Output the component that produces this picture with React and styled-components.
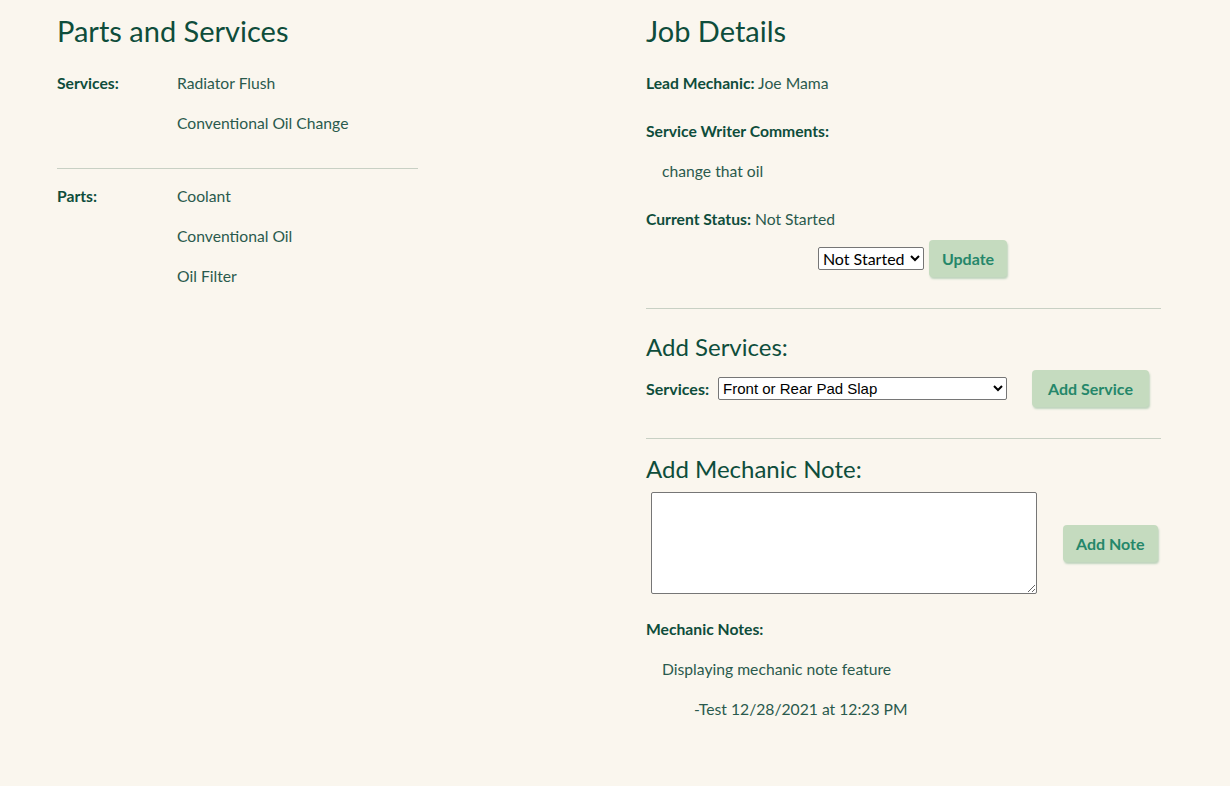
import React from 'react';
import styled, { createGlobalStyle } from 'styled-components';

const GlobalStyle = createGlobalStyle`
  html, body {
    margin: 0;
    padding: 0;
    background: #faf6ee;
  }
  body {
    font-family: Lato, "Noto Sans", sans-serif;
    color: #1d5446;
  }
`;

const services = ['Radiator Flush', 'Conventional Oil Change'];
const parts = ['Coolant', 'Conventional Oil', 'Oil Filter'];

const App = () => {
  return (
    <Page>
      <GlobalStyle />
      <Column>
        <Title>Parts and Services</Title>
        <ListRow $top="20px">
          <RowLabel>Services:</RowLabel>
          <Values>
            {services.map((s) => <Value key={s}>{s}</Value>)}
          </Values>
        </ListRow>
        <Divider $width="361px" $top="33px" $bottom="0" />
        <ListRow $top="15px">
          <RowLabel>Parts:</RowLabel>
          <Values>
            {parts.map((p) => <Value key={p}>{p}</Value>)}
          </Values>
        </ListRow>
      </Column>

      <Column>
        <Title>Job Details</Title>
        <Line $top="20px"><Bold>Lead Mechanic:</Bold> Joe Mama</Line>
        <Line $top="24px"><Bold>Service Writer Comments:</Bold></Line>
        <Line $top="16px" $indent="16px">change that oil</Line>
        <Line $top="24px"><Bold>Current Status:</Bold> Not Started</Line>
        <StatusRow>
          <StatusSelect defaultValue="Not Started">
            <option>Not Started</option>
            <option>In Progress</option>
            <option>Completed</option>
          </StatusSelect>
          <Button>Update</Button>
        </StatusRow>
        <Divider $top="31px" $bottom="0" />
        <SubTitle $top="22px">Add Services:</SubTitle>
        <ServiceRow>
          <Bold>Services:</Bold>
          <ServiceSelect defaultValue="Front or Rear Pad Slap">
            <option>Front or Rear Pad Slap</option>
            <option>Radiator Flush</option>
            <option>Conventional Oil Change</option>
          </ServiceSelect>
          <Button $left="25px" $pad="16px">Add Service</Button>
        </ServiceRow>
        <Divider $top="31px" $bottom="0" />
        <SubTitle $top="14px">Add Mechanic Note:</SubTitle>
        <NoteRow>
          <NoteArea />
          <Button>Add Note</Button>
        </NoteRow>
        <Line $top="23px"><Bold>Mechanic Notes:</Bold></Line>
        <Line $top="16px" $indent="16px">Displaying mechanic note feature</Line>
        <Line $top="16px" $indent="48px">-Test 12/28/2021 at 12:23 PM</Line>
      </Column>
    </Page>
  );
};

export default App;

const Page = styled.div`
  display: grid;
  grid-template-columns: 589px 515px;
  padding: 0 69px 60px 57px;
  min-height: 786px;
  box-sizing: border-box;
`;

const Column = styled.div`
  display: flex;
  flex-direction: column;
`;

const Title = styled.h2`
  margin: 11px 0 0;
  font-size: 29px;
  line-height: 40px;
  font-weight: 400;
  color: #0e4d3b;
`;

const SubTitle = styled.h3`
  margin: ${(p) => p.$top} 0 0;
  font-size: 24px;
  line-height: 32px;
  font-weight: 400;
  color: #0e4d3b;
`;

const ListRow = styled.div`
  display: flex;
  margin-top: ${(p) => p.$top};
  font-size: 15.7px;
  line-height: 24px;
`;

const RowLabel = styled.div`
  width: 120px;
  font-weight: 700;
  color: #0e4d3b;
`;

const Values = styled.div`
  display: flex;
  flex-direction: column;
  gap: 16px;
`;

const Value = styled.div`
  color: #2a5a4d;
`;

const Divider = styled.hr`
  width: ${(p) => p.$width || '100%'};
  margin: ${(p) => p.$top} 0 ${(p) => p.$bottom};
  border: none;
  border-top: 1px solid #c8d0c4;
  height: 0;
`;

const Line = styled.div`
  margin-top: ${(p) => p.$top};
  padding-left: ${(p) => p.$indent || '0'};
  font-size: 15.7px;
  line-height: 24px;
  color: #2a5a4d;
`;

const Bold = styled.span`
  font-weight: 700;
  color: #0e4d3b;
`;

const Button = styled.button`
  margin-left: ${(p) => p.$left || '0'};
  padding: 0 ${(p) => p.$pad || '13px'};
  height: 37px;
  border: none;
  border-radius: 4px;
  background: #c5dbbf;
  box-shadow: 1px 2px 2px rgba(120, 170, 130, 0.45);
  font-family: Lato, "Noto Sans", sans-serif;
  font-size: 16px;
  font-weight: 700;
  color: #25876a;
  cursor: pointer;
`;

const StatusRow = styled.div`
  display: flex;
  align-items: center;
  justify-content: center;
  gap: 5px;
  margin-top: 9px;
  padding-left: 18px;
`;

const StatusSelect = styled.select`
  height: 23px;
  width: 106px;
  font-family: Lato, "Noto Sans", sans-serif;
  font-size: 16px;
  color: #000;
  background: #fff;
  border: 1px solid #767676;
  border-radius: 2px;
`;

const ServiceRow = styled.div`
  display: flex;
  align-items: center;
  margin-top: 7px;
  font-size: 16px;
`;

const ServiceSelect = styled.select`
  margin-left: 9px;
  width: 289px;
  height: 23px;
  font-family: "Liberation Sans", Arial, sans-serif;
  font-size: 15px;
  color: #000;
  background: #fff;
  border: 1px solid #767676;
  border-radius: 2px;
`;

const NoteRow = styled.div`
  display: flex;
  align-items: center;
  gap: 26px;
  margin-top: 7px;
  padding-left: 5px;
`;

const NoteArea = styled.textarea`
  width: 386px;
  height: 102px;
  box-sizing: border-box;
  border: 1px solid #767676;
  border-radius: 2px;
  background: #fff;
  resize: both;
`;
